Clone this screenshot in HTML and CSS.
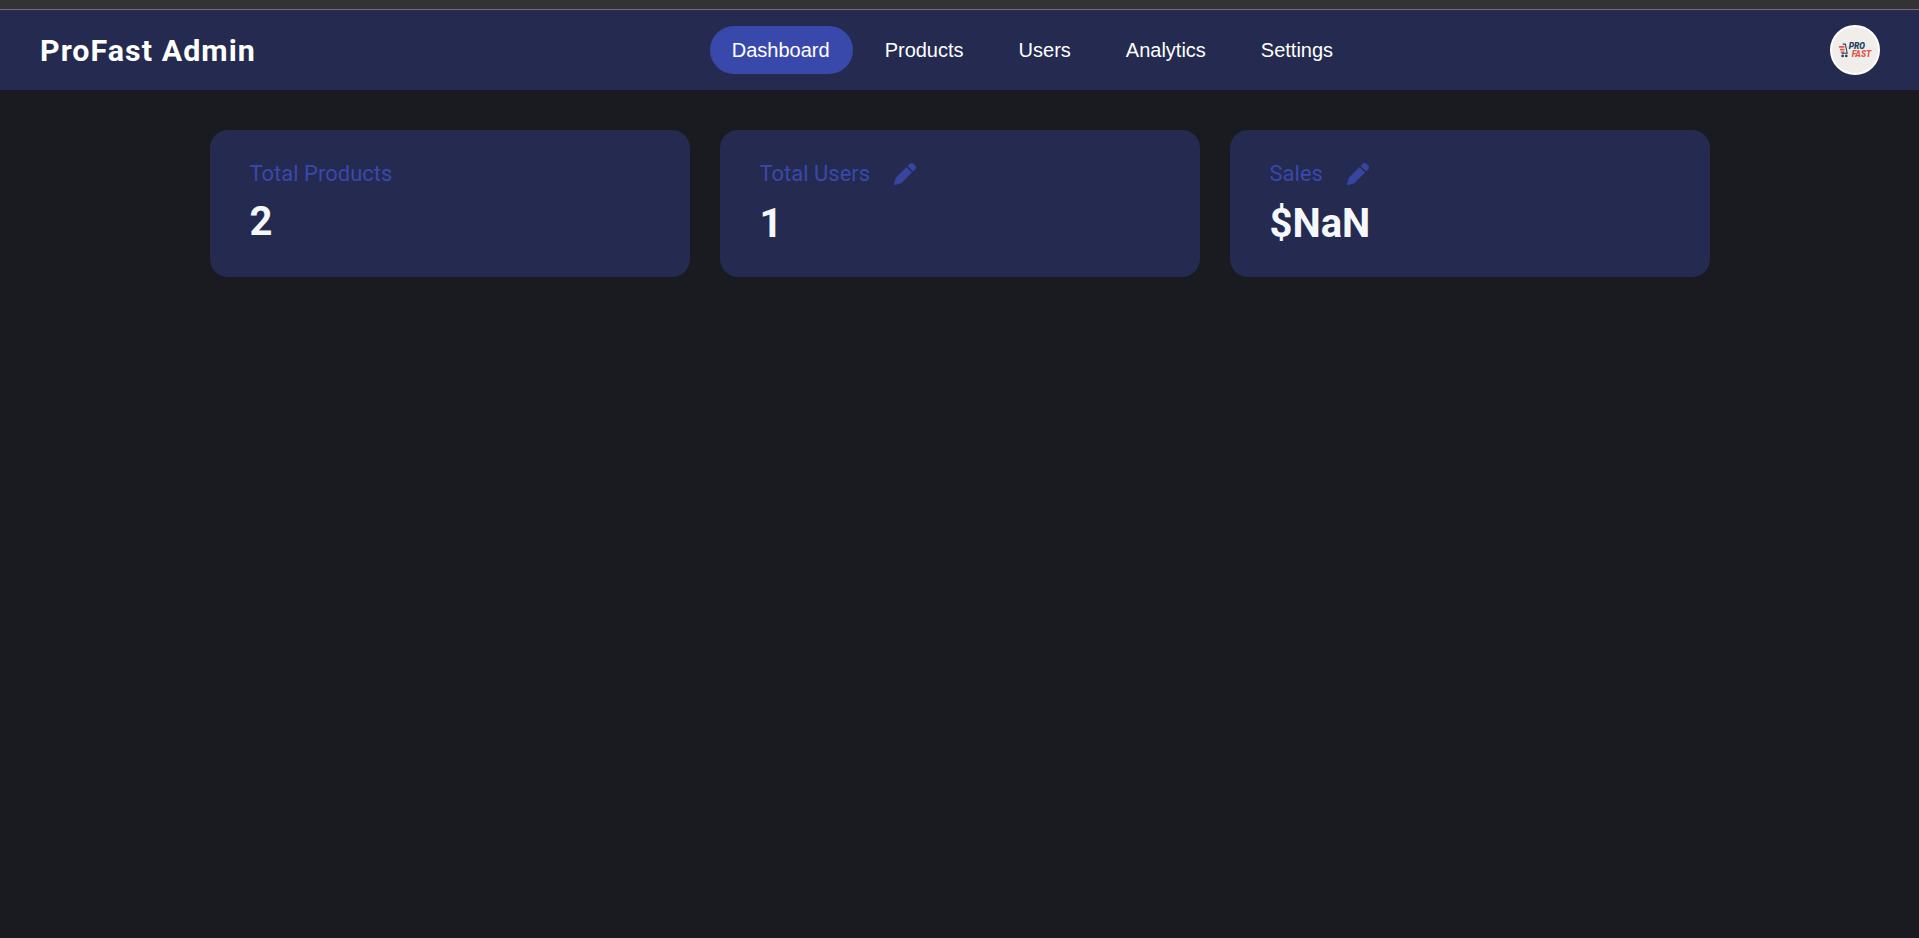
FILE: index.html
```html
<html>
    <head>
        <meta charset="utf-8" />
        <title>ProFast Admin</title>
        <link rel="stylesheet" href="styles.css">
    </head>
    <body>
        <div class="topstrip"></div>

        <header class="navbar">
            <div class="brand">ProFast Admin</div>

            <nav class="navlinks">
                <a class="navlink active">Dashboard</a>
                <a class="navlink">Products</a>
                <a class="navlink">Users</a>
                <a class="navlink">Analytics</a>
                <a class="navlink">Settings</a>
            </nav>

            <div class="avatar">
                <svg class="cart" viewBox="0 0 11 16">
                    <path d="M0 3h6v2H0zM1 6h5v2H1zM2 9h4v2H2z" fill="#e2574c"/>
                    <path d="M4 1h3l2 10H3" fill="none" stroke="#24405f" stroke-width="1.2"/>
                    <circle cx="4" cy="14" r="1.5" fill="#24405f"/>
                    <circle cx="8" cy="14" r="1.5" fill="#24405f"/>
                </svg>
                <div class="logotext">
                    <span class="logopro">PRO</span>
                    <span class="logofast">FAST</span>
                </div>
            </div>
        </header>

        <main class="cards">
            <section class="card">
                <div class="cardtitle">Total Products</div>
                <div class="cardvalue">2</div>
            </section>

            <section class="card">
                <div class="cardtitle">
                    Total Users
                    <svg class="pen" viewBox="0 0 512 512"><path d="M362.7 19.3L314.3 67.7 444.3 197.7l48.4-48.4c25-25 25-65.5 0-90.5L453.3 19.3c-25-25-65.5-25-90.5 0zm-71 71L58.6 323.5c-10.4 10.4-18 23.3-22.2 37.4L1 481.2C-1.5 489.7 .8 498.8 7 505s15.3 8.5 23.7 6.1l120.3-35.4c14.1-4.2 27-11.8 37.4-22.2L421.7 220.3 291.7 90.3z"/></svg>
                </div>
                <div class="cardvalue">1</div>
            </section>

            <section class="card">
                <div class="cardtitle">
                    Sales
                    <svg class="pen" viewBox="0 0 512 512"><path d="M362.7 19.3L314.3 67.7 444.3 197.7l48.4-48.4c25-25 25-65.5 0-90.5L453.3 19.3c-25-25-65.5-25-90.5 0zm-71 71L58.6 323.5c-10.4 10.4-18 23.3-22.2 37.4L1 481.2C-1.5 489.7 .8 498.8 7 505s15.3 8.5 23.7 6.1l120.3-35.4c14.1-4.2 27-11.8 37.4-22.2L421.7 220.3 291.7 90.3z"/></svg>
                </div>
                <div class="cardvalue">$NaN</div>
            </section>
        </main>
    </body>
</html>
```

FILE: styles.css
```css
html, body {
    height: 100%;
}

body {
    margin: 0;
    background-color: #191b20;
    font-family: Roboto, sans-serif;
    color: white;
    overflow: hidden;
}

.topstrip {
    height: 10px;
    background-color: #333333;
    border-bottom: solid 1px #707070;
    box-sizing: border-box;
}

.navbar {
    display: flex;
    justify-content: space-between;
    align-items: center;
    height: 80px;
    padding: 0 39px 0 40px;
    background-color: #242a50;
}

.brand {
    font-size: 30.4px;
    font-weight: 700;
    letter-spacing: 1.05px;
}

.navlinks {
    display: flex;
    gap: 9px;
    margin-right: 21px;
}

.navlink {
    padding: 12px 23px;
    border-radius: 24px;
    font-family: "Liberation Sans", sans-serif;
    font-size: 20px;
    line-height: 24px;
}

.active {
    margin-left: 1px;
    padding-left: 22px;
    background-color: #3949ab;
}

.avatar {
    display: flex;
    justify-content: center;
    align-items: center;
    gap: 0;
    width: 50px;
    height: 50px;
    box-sizing: border-box;
    border: solid 2px white;
    border-radius: 50%;
    background-color: #f0eeea;
}

.cart {
    width: 10px;
    height: 15px;
}

.logotext {
    display: flex;
    flex-direction: column;
    font-size: 8.5px;
    line-height: 8px;
    font-weight: 900;
    font-style: italic;
}

.logopro {
    color: #24405f;
}

.logofast {
    margin-left: 3px;
    color: #e2574c;
}

.cards {
    display: grid;
    grid-template-columns: repeat(3, 480px);
    justify-content: center;
    gap: 30px;
    padding-top: 40px;
}

.card {
    height: 147px;
    box-sizing: border-box;
    padding: 31px 40px 0 40px;
    border-radius: 18px;
    background-color: #242a50;
}

.cardtitle {
    display: flex;
    align-items: flex-start;
    gap: 24px;
    line-height: 26px;
    font-size: 22px;
    color: #3949ab;
}

.pen {
    width: 22px;
    height: 22px;
    margin: 2px 0 4px 0;
    fill: #36459e;
}

.cardvalue {
    margin-top: 11px;
    font-size: 40px;
    font-weight: 700;
    line-height: 47px;
    color: #f5f7fa;
}
```
